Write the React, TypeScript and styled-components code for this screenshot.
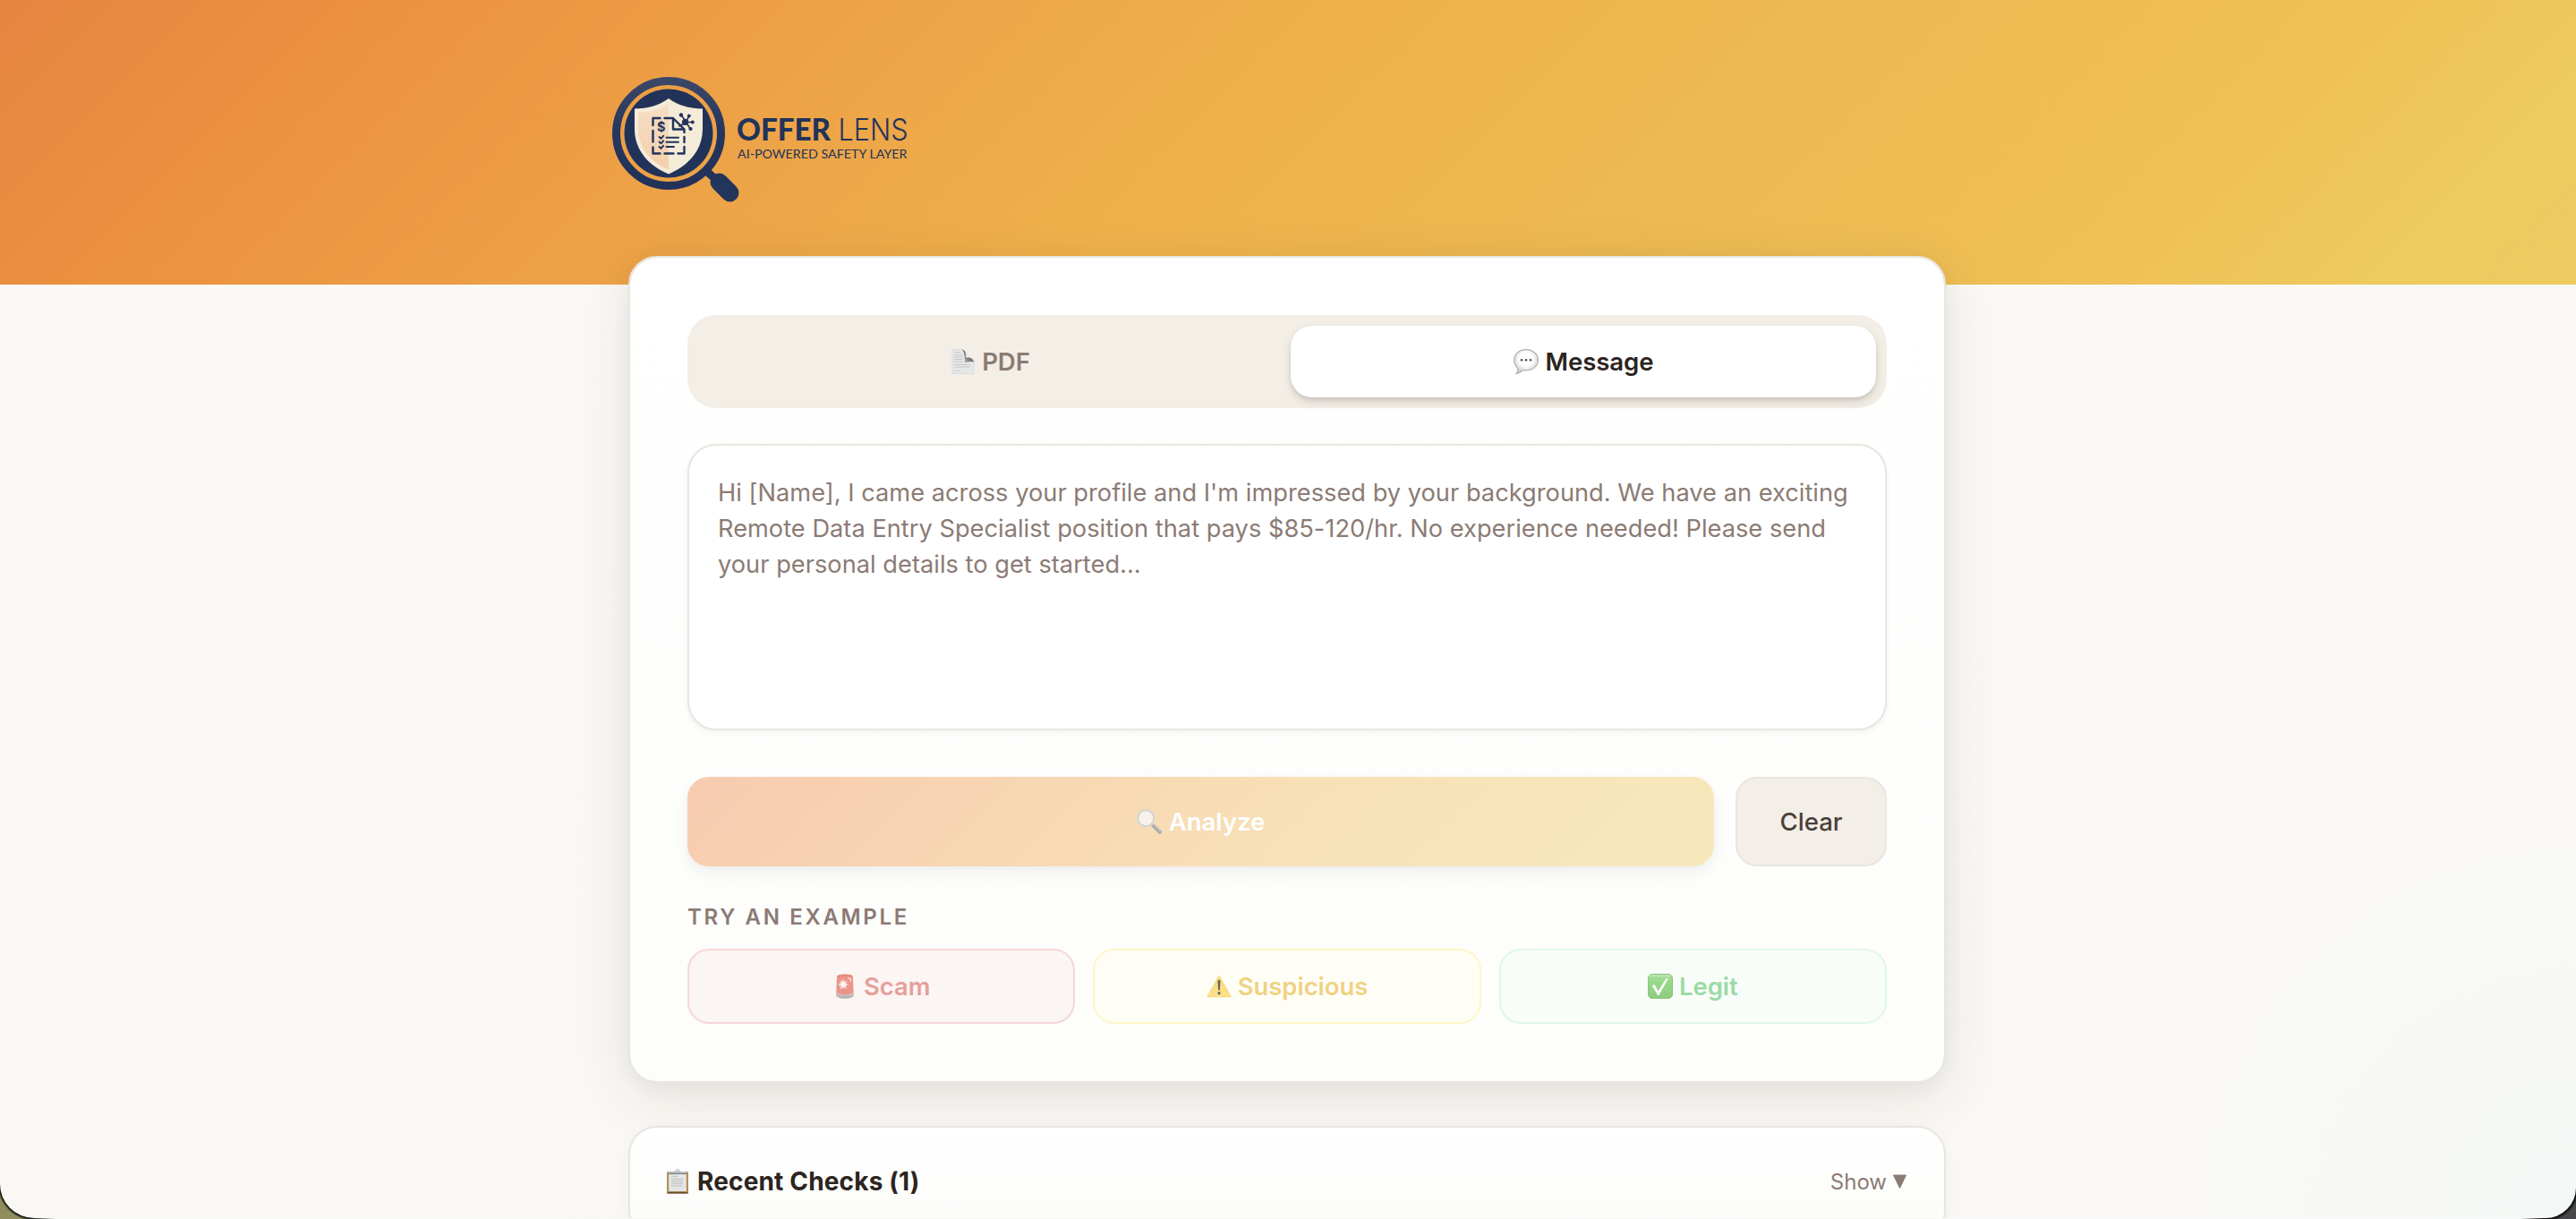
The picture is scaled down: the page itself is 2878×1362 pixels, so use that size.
import React from 'react';
import styled, { createGlobalStyle } from 'styled-components';

const Global = createGlobalStyle`
  *, *::before, *::after { box-sizing: border-box; }
  html, body { margin: 0; padding: 0; height: 100%; overflow: hidden; background: #2e2d2f; }
  body { font-family: Inter, "Liberation Sans", sans-serif; -webkit-font-smoothing: antialiased; }
  button, textarea { font: inherit; margin: 0; }
`;

const Desktop = styled.div`
  height: 1362px;
  overflow: hidden;
  background:
    radial-gradient(circle at 38px 1323px, #15150f 38.5px, #8f8d5e 41px) left / 36px 100% no-repeat,
    radial-gradient(circle at 2px 1327px, #0c0c0c 34.5px, #48474a 38px) right / 36px 100% no-repeat,
    linear-gradient(90deg, #15150f 36px, #f8f8f5 62px, #f6f9f8 2816px, #0c0c0c 2842px);
`;

const Window = styled.div`
  height: 1361px;
  overflow: hidden;
  border-radius: 0 0 34px 38px;
  background:
    radial-gradient(circle 420px at 2878px 1362px, rgba(244, 248, 246, 0.9), rgba(246, 248, 246, 0) 100%),
    linear-gradient(180deg, #faf9f5, #f9f8f4);
`;

const Header = styled.header`
  height: 318px;
  padding-top: 78px;
  background: linear-gradient(135deg, #e68541 0%, #eb923f 14%, #eda247 30%, #efb14b 47%, #ecba52 66%, #efc055 82%, #eeca5f 93%, #edcb60 100%);
`;

const Container = styled.div`
  width: 1536px;
  margin-left: calc(50% - 769px);
  padding: 0 32px;
`;

const Logo = styled.svg`
  display: block;
  margin-left: -23px;
`;

const Main = styled(Container).attrs({ as: 'main' })`
  display: flex;
  flex-direction: column;
  gap: 48px;
  margin-top: -32px;
  position: relative;
`;

const Card = styled.section`
  padding: 64px;
  border: 2px solid #e9e5e0;
  border-radius: 32px;
  background: linear-gradient(180deg, #ffffff, #fdfdfb);
  background-clip: padding-box;
  background-color: #e9e5e0;
  box-shadow: 0 16px 64px rgba(44, 36, 32, 0.1), 0 4px 24px rgba(44, 36, 32, 0.04);
`;

const RecentCard = styled.section`
  display: flex;
  align-items: center;
  justify-content: space-between;
  height: 126px;
  padding: 0 40px 2px;
  border: 2px solid #e9e5e0;
  border-radius: 32px;
  background: linear-gradient(180deg, #ffffff, #fcfcfa);
  box-shadow: 0 4px 16px rgba(44, 36, 32, 0.04);
`;

const Tabs = styled.div`
  display: grid;
  grid-template-columns: 1fr 1fr;
  gap: 8px;
  padding: 12px;
  height: 104px;
  border-radius: 32px;
  background: #f3eee6;
`;

const Tab = styled.button<{ $active?: boolean }>`
  display: flex;
  align-items: center;
  justify-content: center;
  gap: 8px;
  border: 0;
  border-radius: 24px;
  font-size: 27.6px;
  font-weight: 600;
  letter-spacing: -0.1px;
  color: ${(p) => (p.$active ? '#2c2420' : '#8b7b74')};
  background: ${(p) => (p.$active ? '#fff' : 'transparent')};
  box-shadow: ${(p) => (p.$active ? '0 5px 12px rgba(44,36,32,.12), 0 3px 5px -1px rgba(44,36,32,.14)' : 'none')};
`;

const MessageBox = styled.textarea`
  display: block;
  width: 100%;
  height: 320px;
  margin-top: 40px;
  padding: 33px 32px 31px;
  border: 2px solid #e9e5e0;
  border-radius: 32px;
  outline: 0;
  resize: none;
  background: #fff;
  box-shadow: 0 2px 6px rgba(44, 36, 32, 0.06);
  font-size: 27.2px;
  letter-spacing: 0.03px;
  line-height: 40px;
  &::placeholder { color: #8b7b74; opacity: 1; }
`;

const Actions = styled.div`
  display: flex;
  gap: 24px;
  height: 100px;
  margin-top: 52px;
`;

const AnalyzeButton = styled.button`
  flex: 1;
  display: flex;
  align-items: center;
  justify-content: center;
  gap: 7px;
  border: 0;
  border-radius: 24px;
  color: #fff;
  font-size: 27.5px;
  font-weight: 600;
  background: linear-gradient(135deg, #f7cbb0 0%, #f7d7b2 33%, #f8e1b7 60%, #f6e9bb 100%);
  box-shadow: 0 8px 20px rgba(44, 36, 32, 0.05), 0 3px 8px rgba(44, 36, 32, 0.03);
`;

const ClearButton = styled.button`
  width: 169px;
  border: 2px solid #e9e5e0;
  border-radius: 24px;
  color: #4a3f39;
  background: #f3eee8;
  font-size: 27.6px;
  font-weight: 500;
`;

const Label = styled.h2`
  margin: 40px 0 0;
  height: 52px;
  font-size: 24px;
  line-height: 34px;
  font-weight: 600;
  letter-spacing: 2.65px;
  color: #8b7b74;
`;

const Examples = styled.div`
  display: grid;
  grid-template-columns: repeat(3, 1fr);
  gap: 20px;
`;

const tones = {
  scam: { ink: '#e5a09c', fill: '#fbf5f3', line: '#f5d8d7' },
  suspicious: { ink: '#efd283', fill: '#fffef6', line: '#fef6c8' },
  legit: { ink: '#9cdaa5', fill: '#f8fdf9', line: '#dff8e7' },
};

const Example = styled.button<{ $tone: keyof typeof tones }>`
  display: flex;
  align-items: center;
  justify-content: center;
  gap: 7px;
  height: 84px;
  border: 2px solid ${(p) => tones[p.$tone].line};
  border-radius: 24px;
  color: ${(p) => tones[p.$tone].ink};
  background: ${(p) => tones[p.$tone].fill};
  font-size: 27.4px;
  font-weight: 600;
`;

const RecentTitle = styled.h3`
  display: flex;
  align-items: center;
  gap: 9px;
  margin: 0;
  font-size: 28px;
  font-weight: 700;
  letter-spacing: 0.16px;
  color: #2c2420;
`;

const Toggle = styled.button`
  display: flex;
  align-items: center;
  gap: 6px;
  padding: 0;
  border: 0;
  background: none;
  font-size: 24px;
  color: #8b7b74;
`;

const Glyph = styled.svg`
  display: block;
  flex: none;
  overflow: visible;
`;

const navy = '#22335a';

const OfferLensLogo = () => (
  <Logo width="352" height="160" viewBox="679 78 352 160">
    <defs>
      <linearGradient id="ring" x1="0" y1="0" x2="0" y2="1">
        <stop offset="0" stopColor="#3a4768" />
        <stop offset=".5" stopColor="#26365c" />
        <stop offset="1" stopColor="#21315a" />
      </linearGradient>
      <linearGradient id="shieldLeft" x1="0" y1="0" x2="0" y2="1">
        <stop offset="0" stopColor="#f6dfc5" />
        <stop offset="1" stopColor="#f3cfab" />
      </linearGradient>
    </defs>
    <path d="M788 190 L798 199" stroke={navy} strokeWidth="9" />
    <path d="M803.500 203.500 L815.500 215.500" stroke="#24355c" strokeWidth="20" strokeLinecap="round" />
    <circle cx="747" cy="149" r="58.500" fill="none" stroke="url(#ring)" strokeWidth="9" />
    <circle cx="747" cy="149" r="49.500" fill={navy} />
    <path d="M747 110 C758 118 771 121.500 785 121.500 V144 C785 167 770 185 747 194.500 C724 185 709 167 709 144 V121.500 C723 121.500 736 118 747 110 Z" fill="#f4ecd9" />
    <path d="M747 115.500 C737 122 726 125.500 713 126 V144 C713 165 727 181 747 189.500 Z" fill="url(#shieldLeft)" />
    <g fill="none" stroke={navy} strokeWidth="2.400" strokeLinejoin="round" strokeLinecap="round">
      <path d="M729.500 140 V132 H737.500 M742.500 132 H752 L764.500 144.500 V148 M752 132 V144.500 H764.500 M764.500 153 V159 M764.500 164 V171.500 H757.500 M752.500 171.500 H742.500 M737.500 171.500 H729.500 V164.500 M729.500 158.500 V146" />
      <path d="M744.500 153.700 H758 M744.500 158.700 H758 M744.500 164 H753" strokeWidth="2" />
      <path d="M736.500 153 l2 1.800 l2.600 -3 M736.500 158.500 l2 1.800 l2.600 -3 M736.500 164 l2 1.800 l2.600 -3" strokeWidth="1.900" />
      <path d="M766.500 136.500 L761.500 129 M766.500 136.500 L769.500 129.800 M766.500 136.500 L773.500 136.500 M766.500 136.500 L771 143.500 M766.500 136.500 L759 141" strokeWidth="1.600" />
    </g>
    <g fill={navy}>
      <circle cx="765.500" cy="136.300" r="3.600" />
      <circle cx="761" cy="128.500" r="2.200" />
      <circle cx="769.800" cy="129.500" r="1.900" />
      <circle cx="773.800" cy="136.500" r="1.900" />
      <circle cx="771.500" cy="144" r="2.100" />
      <text x="738.800" y="147.200" fontSize="14.500" fontWeight="700" textAnchor="middle" fontFamily="Inter, sans-serif">$</text>
      <text x="823" y="157" fontSize="34" fontWeight="900" textLength="105" lengthAdjust="spacingAndGlyphs" fontFamily="Lato, sans-serif">OFFER</text>
      <text x="936.500" y="157" fontSize="33.800" fontWeight="300" textLength="78" lengthAdjust="spacingAndGlyphs" fontFamily="Inter, sans-serif">LENS</text>
      <text x="824" y="176.700" fontSize="14.200" fontWeight="400" textLength="189.500" lengthAdjust="spacingAndGlyphs" fontFamily="Lato, sans-serif">AI-POWERED SAFETY LAYER</text>
    </g>
  </Logo>
);

const PageIcon = () => (
  <Glyph width="26" height="28" viewBox="1 0 26 28">
    <defs>
      <linearGradient id="curl" x1="0" y1="1" x2="1" y2="0">
        <stop offset="0" stopColor="#d9d9d9" />
        <stop offset=".4" stopColor="#7d7d7e" />
        <stop offset="1" stopColor="#4c4d4f" />
      </linearGradient>
    </defs>
    <path d="M2 .5 H14 C17 2 17.500 6 17 9.500 C21 9 25 10 26 13 V27.500 H2 Z" fill="#e6e7e8" stroke="#d6d7d8" strokeWidth=".8" />
    <path d="M12.500 .5 C17 1.500 17.500 6 17 9.500 C21.500 9 25 10 26 14.500 C22 13 19 15 15.500 15 C16.500 9 15.500 3 12.500 .5 Z" fill="url(#curl)" />
    <path d="M4 3.500 H11 M4 6.500 H13 M4 9 H13.500 M4 11.500 H13.500 M4 14 H14 M4 17.500 H23 M4 20 H22 M4 24 H10" stroke="#c6c8ca" strokeWidth="1" />
  </Glyph>
);

const SpeechIcon = () => (
  <Glyph width="28" height="28" viewBox="0 0 28 28">
    <defs>
      <radialGradient id="bubble" cx=".5" cy=".4" r=".6">
        <stop offset=".5" stopColor="#fdfdfd" />
        <stop offset="1" stopColor="#c9c9cb" />
      </radialGradient>
    </defs>
    <path d="M14 .7 C21.500 .7 27.300 5.500 27.300 12.300 C27.300 19.200 21.500 23.800 14 23.800 C12.500 23.800 11.300 23.700 10.200 23.400 C8.500 25.500 6 27.200 3.200 27.400 C4.600 25.800 5 23.700 4.800 21.400 C2.200 19.300 .7 16.200 .7 12.300 C.7 5.500 6.500 .7 14 .7 Z" fill="url(#bubble)" stroke="#b0b0b2" strokeWidth="1.200" />
    <g fill="#4c4c4e"><circle cx="9" cy="12.300" r="1.250" /><circle cx="14" cy="12.300" r="1.250" /><circle cx="19" cy="12.300" r="1.250" /></g>
  </Glyph>
);

const LensIcon = () => (
  <Glyph width="29" height="28" viewBox="0 0 29 28">
    <path d="M17 17.500 L20.500 20.500" stroke="#b9bcbd" strokeWidth="2.500" />
    <path d="M19.500 19.500 L25.800 25.600" stroke="#a5aaad" strokeWidth="4.200" strokeLinecap="round" />
    <path d="M20.300 18.800 L26 24.300" stroke="#c6cacb" strokeWidth="1.300" strokeLinecap="round" />
    <circle cx="10.300" cy="10.300" r="9" fill="#f9f2ea" stroke="#cbcdcb" strokeWidth="1.900" />
    <circle cx="10.300" cy="10.300" r="9.700" fill="none" stroke="#dfdfdc" strokeWidth=".8" />
  </Glyph>
);

const SirenIcon = () => (
  <Glyph width="28" height="28" viewBox="0 0 28 28">
    <defs>
      <linearGradient id="sirenBase" x1="0" y1="0" x2="0" y2="1">
        <stop offset="0" stopColor="#e3d5d2" />
        <stop offset="1" stopColor="#aaa8a6" />
      </linearGradient>
      <radialGradient id="flare"><stop offset="0" stopColor="#fff" /><stop offset="1" stopColor="#fff" stopOpacity="0" /></radialGradient>
    </defs>
    <path d="M4 19.500 H24 V23.500 C24 26 20 27.700 14 27.700 C8 27.700 4 26 4 23.500 Z" fill="url(#sirenBase)" />
    <path d="M5 3.500 C5 1.500 7 .5 14 .5 C21 .5 23 1.500 23 3.500 L23.600 20 C23.600 22 20 23 14 23 C8 23 4.400 22 4.400 20 Z" fill="#ec9488" />
    <path d="M6 3 C8 1.500 20 1.500 22 3" stroke="#d98378" strokeWidth="1" fill="none" />
    <circle cx="12" cy="12" r="5.500" fill="url(#flare)" />
    <path d="M12 4.500 L12.900 9.800 L17 7 L14.200 11.300 L19.500 12 L14.300 13 L16 17.500 L12.400 13.900 L8.800 18 L10.200 13 L5.500 12 L10 10.800 L8 6.500 L11.200 9.800 Z" fill="#fff" opacity=".7" />
    <path d="M17 5 C20 4.500 21 6 20.500 9" stroke="#fbe3df" strokeWidth="1.400" fill="none" />
  </Glyph>
);

const WarningIcon = () => (
  <Glyph width="28" height="28" viewBox="0 0 28 28">
    <defs>
      <linearGradient id="warn" x1="0" y1="0" x2="0" y2="1">
        <stop offset="0" stopColor="#f8d878" /><stop offset="1" stopColor="#fce28c" />
      </linearGradient>
    </defs>
    <path d="M14 2.500 L27 25.500 H1 Z" fill="url(#warn)" stroke="#f7dc84" strokeWidth="1.400" strokeLinejoin="round" />
    <path d="M12.500 8 C12.500 6.600 15.500 6.600 15.500 8 L14.900 18.300 H13.100 Z" fill="#68695f" />
    <circle cx="14" cy="21.700" r="1.600" fill="#68695f" />
  </Glyph>
);

const CheckIcon = () => (
  <Glyph width="28" height="28" viewBox="0 0 28 28">
    <defs>
      <linearGradient id="check" x1="0" y1="0" x2="0" y2="1">
        <stop offset="0" stopColor="#abdf9f" /><stop offset=".3" stopColor="#98d98a" /><stop offset="1" stopColor="#90cb80" />
      </linearGradient>
    </defs>
    <rect x=".5" y=".5" width="27" height="27" rx="4.500" fill="url(#check)" stroke="#89c77b" />
    <path d="M3.500 2.300 H24.500" stroke="#c6ecbd" strokeWidth="1.200" strokeLinecap="round" />
    <path d="M4.800 13.200 L7.400 12 L11.500 19.500 L20.500 5.200 L22.800 5.500 L12.300 24 H11.200 Z" fill="#fff" />
  </Glyph>
);

const ClipboardIcon = () => (
  <Glyph width="26" height="28" viewBox="0 0 26 28">
    <rect x="1" y="3" width="24" height="24.500" rx="1.500" fill="#b3905f" />
    <path d="M1.500 26.700 H24.500" stroke="#6b4f2e" strokeWidth="1.700" />
    <rect x="3.200" y="5.500" width="19.600" height="19.500" fill="#e4e5e5" />
    <path d="M6 8.500 H13 M6 11.500 H19 M6 14 H19 M6 16.500 H19 M6 19 H18" stroke="#c8cacb" strokeWidth="1.700" />
    <path d="M3.200 5.500 V3 H9.500 L11 1.500 H15 L16.500 3 H22.800 V5.500 Z" fill="#b7bcc0" />
    <path d="M3.200 5.500 H22.800" stroke="#73777a" strokeWidth="1" />
    <circle cx="13" cy="1.700" r="1.500" fill="#e8edf2" stroke="#aeb6bd" strokeWidth=".8" />
  </Glyph>
);

const Triangle = () => (
  <Glyph width="18" height="16" viewBox="0 0 18 16">
    <path d="M1.500 1 H15.500 L8.500 15.500 Z" fill="#8b7b74" stroke="#8b7b74" strokeLinejoin="round" />
  </Glyph>
);

const sample =
  "Hi [Name], I came across your profile and I'm impressed by your background. We have an exciting Remote Data Entry Specialist position that pays $85-120/hr. No experience needed! Please send your personal details to get started...";

export default function App() {
  return (
    <>
      <Global />
      <Desktop>
        <Window>
          <Header>
            <Container>
              <OfferLensLogo />
            </Container>
          </Header>
          <Main>
            <Card>
              <Tabs>
                <Tab><PageIcon />PDF</Tab>
                <Tab $active><SpeechIcon />Message</Tab>
              </Tabs>
              <MessageBox placeholder={sample} />
              <Actions>
                <AnalyzeButton><LensIcon />Analyze</AnalyzeButton>
                <ClearButton>Clear</ClearButton>
              </Actions>
              <Label>TRY AN EXAMPLE</Label>
              <Examples>
                <Example $tone="scam"><SirenIcon />Scam</Example>
                <Example $tone="suspicious"><WarningIcon />Suspicious</Example>
                <Example $tone="legit"><CheckIcon />Legit</Example>
              </Examples>
            </Card>
            <RecentCard>
              <RecentTitle><ClipboardIcon />Recent Checks (1)</RecentTitle>
              <Toggle>Show<Triangle /></Toggle>
            </RecentCard>
          </Main>
        </Window>
      </Desktop>
    </>
  );
}
